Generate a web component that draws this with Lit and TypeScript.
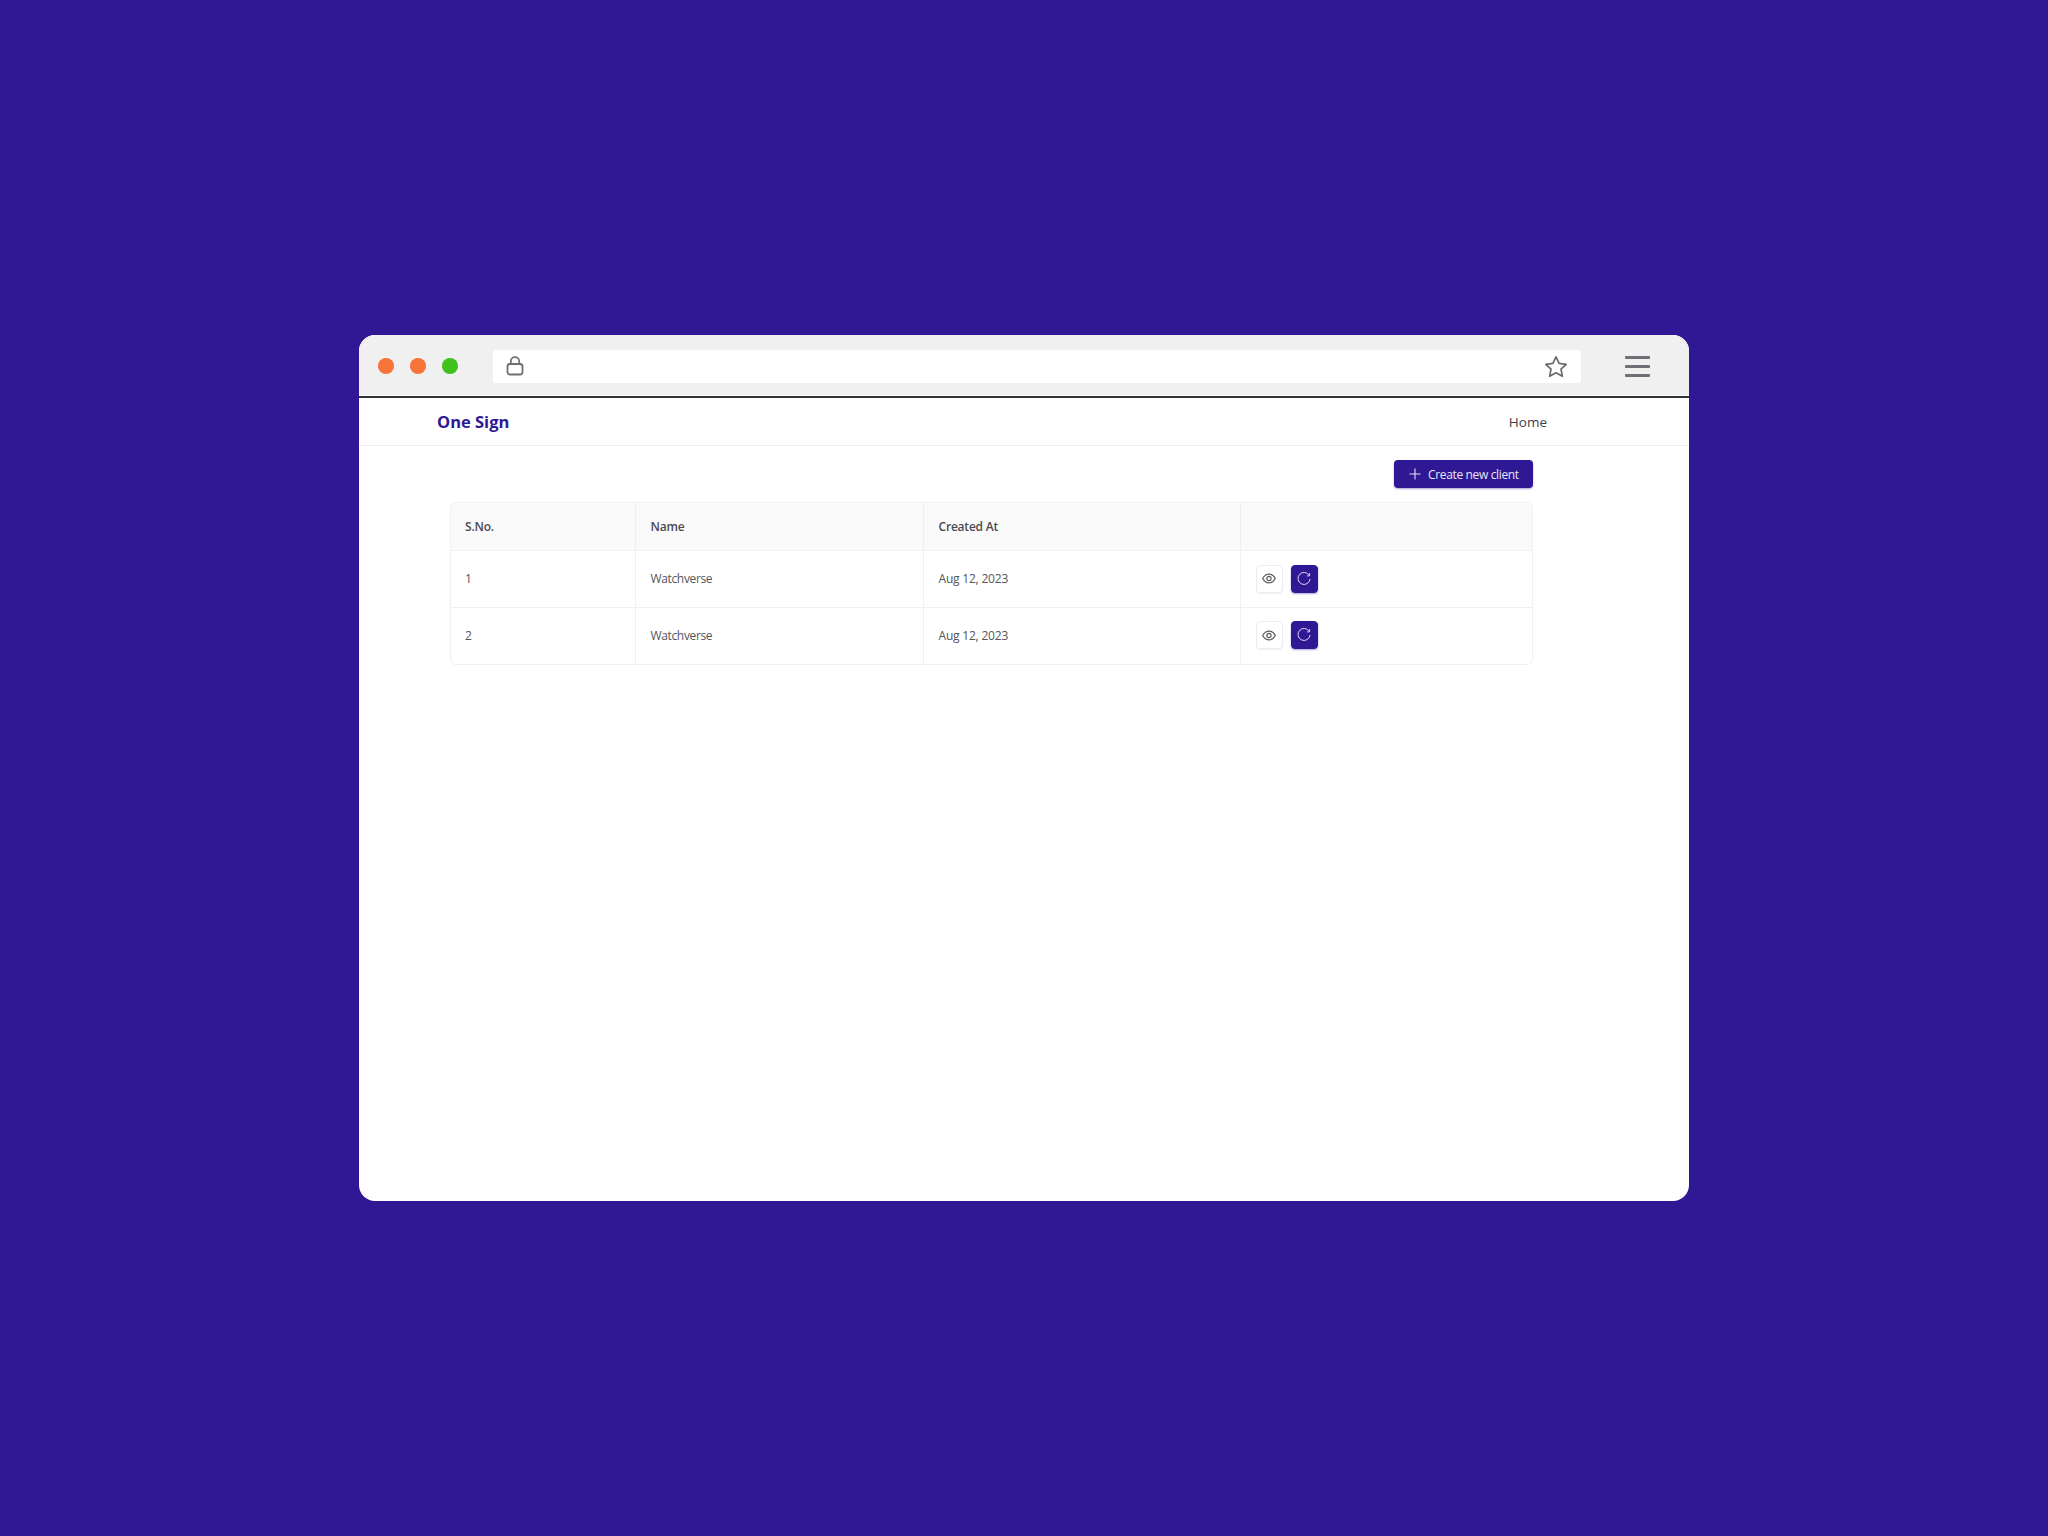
import { LitElement, html, css, svg } from "lit";
import { customElement } from "lit/decorators.js";

const rows = [
  { n: 1, name: "Watchverse", at: "Aug 12, 2023" },
  { n: 2, name: "Watchverse", at: "Aug 12, 2023" },
];

const lock = svg`<svg width="18" height="20" viewBox="0 0 18 20" fill="none" stroke="#6f6f73" stroke-width="1.8"><rect x="1.5" y="8" width="15" height="10.5" rx="2.5"/><path d="M4.8 8V5.4a4.2 4.2 0 0 1 8.4 0V8"/></svg>`;
const star = svg`<svg width="24" height="23" viewBox="0 0 24 23" fill="none" stroke="#6a6a70" stroke-width="1.7" stroke-linejoin="round"><path d="M12 1.8l3.1 6.6 7.1.9-5.2 4.9 1.4 7.1L12 17.8l-6.4 3.5L7 14.2 1.8 9.3l7.1-.9z"/></svg>`;
const plus = svg`<svg width="12" height="12" viewBox="0 0 12 12" stroke="#e4e0f2" stroke-width="1.1"><path d="M6 .5v11M.5 6h11"/></svg>`;
const eye = svg`<svg width="14" height="11" viewBox="0 0 14 11" fill="none" stroke="#5d5d63" stroke-width="1.2"><path d="M.7 5.5C2.2 2.6 4.4 1.1 7 1.1s4.800 1.500 6.300 4.400C11.800 8.400 9.600 9.900 7 9.900S2.200 8.400.7 5.500z"/><circle cx="7" cy="5.500" r="2.100"/></svg>`;
const refresh = svg`<svg width="14" height="14" viewBox="0 0 14 14" fill="none" stroke="#dcd8ee" stroke-width="1"><path d="M12.300 3.600A6 6 0 1 0 13 7"/><path d="M12.600 1v2.900H9.800" stroke-width=".9"/></svg>`;

@customElement("app-root")
export class AppRoot extends LitElement {
  static styles = css`
    :host {
      display: block;
      min-height: 1536px;
      box-sizing: border-box;
      background: #301894;
      padding: 335px 359px 0;
      font-family: "Open Sans", "Noto Sans", sans-serif;
    }
    .win {
      width: 1330px;
      height: 866px;
      background: #fff;
      border-radius: 16px;
      overflow: hidden;
    }
    .chrome {
      height: 58px;
      background: #f0f0f0;
      display: flex;
      align-items: center;
      padding: 2px 39px 0 19px;
      border-bottom: 1px solid #fff;
    }
    .dots { display: flex; gap: 16.500px; width: 115px; flex: none; }
    .dot { width: 15.500px; height: 15.500px; border-radius: 50%; background: #f7743a; }
    .dot.g { background: #41c11d; }
    .addr {
      flex: none;
      width: 1088px;
      height: 33px;
      background: #fff;
      border-radius: 3px;
      box-sizing: border-box;
      padding: 0 13px;
      display: flex;
      align-items: center;
      justify-content: space-between;
    }
    .addr svg { display: block; }
    .menu {
      margin-left: auto;
      width: 25px;
      display: flex;
      flex-direction: column;
      gap: 6px;
    }
    .menu i { display: block; height: 3px; border-radius: 1px; background: #6f6f75; }
    .rule { height: 2px; background: #33333a; }
    .nav {
      height: 48px;
      box-sizing: border-box;
      border-bottom: 1px solid #efeff1;
      display: flex;
      align-items: center;
      justify-content: space-between;
      padding: 0 142px 0 78px;
    }
    .brand { font-size: 16.500px; font-weight: 700; color: #2f1893; }
    .home { font-size: 13.500px; color: #3f3f46; }
    .main { padding: 14px 156px 0 91px; }
    .bar { display: flex; justify-content: flex-end; margin-bottom: 14px; }
    .create {
      height: 28px;
      width: 139px;
      box-sizing: border-box;
      padding: 0 0 0 15px;
      display: flex;
      align-items: center;
      gap: 7px;
      border: none;
      border-radius: 4px;
      background: #2f1893;
      color: #e9e6f5;
      font: 500 12px "Open Sans", "Noto Sans", sans-serif;
      letter-spacing: -0.35px;
      white-space: nowrap;
      box-shadow: 0 1px 2px rgba(47, 24, 147, 0.4);
    }
    .wrap {
      border: 1px solid #f0f0f2;
      border-radius: 6px;
      overflow: hidden;
    }
    table {
      width: 100%;
      table-layout: fixed;
      border-collapse: collapse;
      font-size: 12px;
      color: #55555c;
    }
    col.a { width: 184px; }
    col.b { width: 288px; }
    col.c { width: 317px; }
    th, td {
      padding: 0 0 0 15px;
      text-align: left;
      border-left: 1px solid #f0f0f2;
      border-bottom: 1px solid #f0f0f2;
    }
    th:first-child, td:first-child { border-left: none; padding-left: 14px; }
    th {
      height: 47px;
      background: #fafafa;
      font-weight: 600;
      color: #4a4a52;
      letter-spacing: -0.2px;
    }
    td {
      height: 57px;
      letter-spacing: -0.2px;
      padding-bottom: 1px;
      box-sizing: border-box;
    }
    tr:last-child td { border-bottom: none; height: 56px; }
    td.name { letter-spacing: -0.35px; }
    .acts { display: flex; gap: 8px; }
    .ic {
      width: 27px;
      height: 28px;
      padding: 0;
      box-sizing: border-box;
      border-radius: 4px;
      display: flex;
      align-items: center;
      justify-content: center;
      border: 1px solid #ececee;
      background: #fff;
      box-shadow: 0 1px 1px rgba(0, 0, 0, 0.05);
    }
    .ic.p { background: #2f1893; border-color: #2f1893; box-shadow: 0 1px 2px rgba(47, 24, 147, 0.4); }
  `;

  render() {
    return html`
      <div class="win">
        <div class="chrome">
          <div class="dots"><span class="dot"></span><span class="dot"></span><span class="dot g"></span></div>
          <div class="addr">${lock}${star}</div>
          <div class="menu"><i></i><i></i><i></i></div>
        </div>
        <div class="rule"></div>
        <nav class="nav"><span class="brand">One Sign</span><span class="home">Home</span></nav>
        <main class="main">
          <div class="bar"><button class="create">${plus}Create new client</button></div>
          <div class="wrap">
            <table>
              <colgroup><col class="a" /><col class="b" /><col class="c" /><col /></colgroup>
              <thead><tr><th>S.No.</th><th>Name</th><th>Created At</th><th></th></tr></thead>
              <tbody>
                ${rows.map(
                  (r) => html`<tr>
                    <td>${r.n}</td>
                    <td class="name">${r.name}</td>
                    <td>${r.at}</td>
                    <td>
                      <div class="acts">
                        <button class="ic">${eye}</button>
                        <button class="ic p">${refresh}</button>
                      </div>
                    </td>
                  </tr>`
                )}
              </tbody>
            </table>
          </div>
        </main>
      </div>
    `;
  }
}
